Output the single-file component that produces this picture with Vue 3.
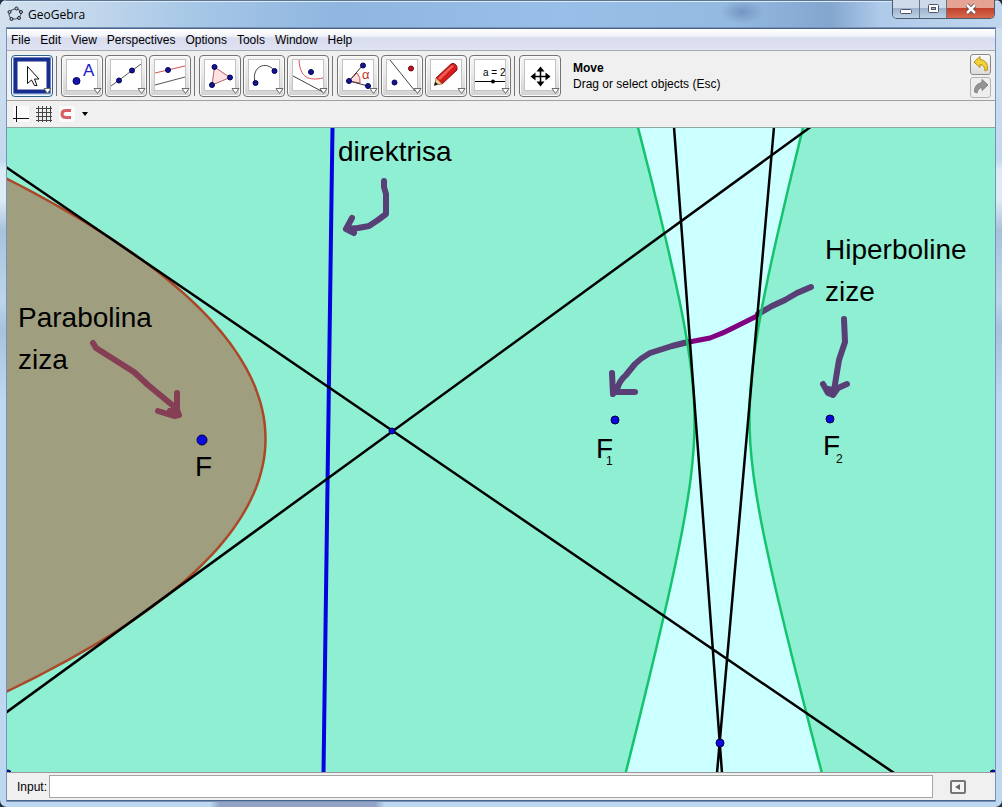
<script setup>
import { ref } from 'vue'

const menus = ['File', 'Edit', 'View', 'Perspectives', 'Options', 'Tools', 'Window', 'Help']
const groups = [
  ['Move'],
  ['Point', 'Line', 'Parallel Line'],
  ['Polygon', 'Arc', 'Parabola'],
  ['Angle', 'Reflect', 'Pen', 'Slider'],
  ['Pan'],
]
const active = ref('Move')
const command = ref('')

function hyperbola(side) {
  const cx = 722, cy = 419.5, a = 27.5, b = 103.2, tilt = 0.0047
  const pts = []
  for (let y = -300; y <= 360; y += 6) {
    const x = side * a * Math.sqrt(1 + (y / b) ** 2)
    pts.push(`${(cx + x + y * tilt).toFixed(1)},${(cy + y - x * tilt).toFixed(1)}`)
  }
  return 'M' + pts.join('L')
}
function parabola() {
  const vx = 265.5, vy = 440.5, p = 63.5, tilt = 0.014
  const pts = []
  for (let t = -270; t <= 270; t += 6) {
    const s = (t * t) / (4 * p)
    pts.push(`${(vx - s - t * tilt).toFixed(1)},${(vy + t - s * tilt).toFixed(1)}`)
  }
  return 'M' + pts.join('L')
}
const left = hyperbola(-1)
const right = hyperbola(1)
const para = parabola()
</script>

<template>
  <div class="window">
    <header class="titlebar">
      <svg class="logo" width="16" height="16" viewBox="0 0 16 16">
        <ellipse cx="8" cy="8" rx="6" ry="5" fill="none" stroke="#555" transform="rotate(-15 8 8)" />
        <g fill="#b9bde8" stroke="#222">
          <circle cx="9.500" cy="2.500" r="1.500" /><circle cx="2.500" cy="6" r="1.500" />
          <circle cx="4.500" cy="13" r="1.500" /><circle cx="12" cy="12" r="1.500" /><circle cx="14" cy="6" r="1.500" />
        </g>
      </svg>
      <span class="title">GeoGebra</span>
      <div class="controls">
        <button aria-label="Minimize"><svg width="14" height="12" viewBox="0 0 14 12"><rect x="1.500" y="6.500" width="11" height="4" rx="1" fill="#fff" stroke="#4c5568" /></svg></button>
        <button aria-label="Maximize"><svg width="14" height="12" viewBox="0 0 14 12"><rect x="2.500" y="1.500" width="10" height="8" rx="1" fill="#fff" stroke="#4c5568" /><rect x="5.500" y="4.500" width="4" height="2" fill="#9db4cc" stroke="#4c5568" /></svg></button>
        <button aria-label="Close" class="close"><svg width="14" height="12" viewBox="0 0 14 12"><path d="M3 2L11 10M11 2L3 10" stroke="#554047" stroke-width="4" /><path d="M3 2L11 10M11 2L3 10" stroke="#fff" stroke-width="2.500" /></svg></button>
      </div>
    </header>
    <main class="client">
      <nav class="menubar">
        <button v-for="m in menus" :key="m">{{ m }}</button>
      </nav>
      <div class="toolbar">
        <div v-for="g in groups" :key="g[0]" class="group">
          <button v-for="t in g" :key="t" :aria-label="t" class="tool" :class="{ active: t === active }" @click="active = t">
            <svg width="40" height="40" viewBox="0 0 40 40" fill="none">
              <rect v-if="t !== 'Move'" x="4.500" y="3.500" width="31" height="31" fill="#fff" stroke="#c3c3c3" />
              <rect v-else x="3.500" y="3.500" width="33" height="32" fill="#fff" stroke="#172d8f" stroke-width="4" />
              <path v-if="t === 'Move'" d="M15.500 10.500V27.500L19.500 24L22.500 29.500H25L22.500 23H27Z" fill="#fff" stroke="#111" />
              <template v-if="t === 'Point'">
                <circle cx="14.500" cy="25" r="3.500" fill="#1515b0" stroke="#000058" />
                <text x="21" y="20" class="letter">A</text>
              </template>
              <template v-if="t === 'Line'">
                <path d="M5 30L35 8" stroke="#555" />
                <g fill="#15158c" stroke="#000060"><circle cx="13" cy="24.500" r="2.500" /><circle cx="26" cy="14.500" r="2.500" /></g>
              </template>
              <template v-if="t === 'Parallel Line'">
                <path d="M5 17L35 10" stroke="#d85050" /><path d="M5 29L35 21" stroke="#555" />
                <circle cx="18" cy="14" r="2.500" fill="#15158c" stroke="#000060" />
              </template>
              <template v-if="t === 'Polygon'">
                <path d="M14.500 11L30 21.500L12 29Z" fill="#ffe2e2" stroke="#b86060" />
                <g fill="#15158c" stroke="#000060"><circle cx="14.500" cy="11" r="2.500" /><circle cx="30" cy="21.500" r="2.500" /><circle cx="12" cy="29" r="2.500" /></g>
              </template>
              <template v-if="t === 'Arc'">
                <path d="M11.500 27C6 12 22 3 30.500 15" stroke="#444" />
                <g fill="#15158c" stroke="#000060"><circle cx="11.500" cy="27" r="2.500" /><circle cx="30.500" cy="15" r="2.500" /></g>
              </template>
              <template v-if="t === 'Parabola'">
                <path d="M5 20L35 36" stroke="#444" /><path d="M11 4C12 22 21 25 35 22" stroke="#d85050" />
                <circle cx="23" cy="16" r="2.500" fill="#15158c" stroke="#000060" />
              </template>
              <template v-if="t === 'Angle'">
                <path d="M11 25L19 17Q23 21 22 27Z" fill="#ffdede" stroke="#c85050" />
                <path d="M25 9L11 25L30 30" stroke="#333" />
                <text x="24" y="23" class="alpha">α</text>
                <g fill="#15158c" stroke="#000060"><circle cx="25" cy="9.500" r="2.500" /><circle cx="11" cy="25" r="2.500" /><circle cx="30" cy="30" r="2.500" /></g>
              </template>
              <template v-if="t === 'Reflect'">
                <path d="M8 4L33 35" stroke="#444" />
                <circle cx="12.500" cy="26.500" r="2.500" fill="#15158c" stroke="#000060" /><circle cx="29" cy="12.500" r="2.500" fill="#b81522" stroke="#700010" />
              </template>
              <template v-if="t === 'Pen'">
                <path d="M10 22L25 8Q29 6 31 11V14L16 28Z" fill="#d41c1c" stroke="#8c1010" />
                <path d="M12 22L26 9L28 10L14 24Z" fill="#f06055" />
                <path d="M10 22L16 28L9 29Z" fill="#f0cf98" stroke="#a08050" /><path d="M9 26L12 28L8 30Z" fill="#111" />
              </template>
              <template v-if="t === 'Slider'">
                <text x="13" y="20" class="slider">a = 2</text>
                <path d="M5 25.500H35" stroke="#000" /><circle cx="23" cy="25.500" r="2" fill="#000" />
              </template>
              <template v-if="t === 'Pan'">
                <path d="M20.500 13V28M13 20.500H28" stroke="#000" stroke-width="1.500" />
                <path d="M20.500 10.500L24.500 15.500H16.500ZM20.500 30.500L24.500 25.500H16.500ZM10.500 20.500L15.500 16.500V24.500ZM30.500 20.500L25.500 16.500V24.500Z" fill="#000" />
              </template>
              <path d="M32 32.500H39L35.500 37.500Z" fill="#fff" stroke="#6b6b6b" />
            </svg>
          </button>
        </div>
        <p class="help"><strong>Move</strong><span>Drag or select objects (Esc)</span></p>
        <div class="history">
          <button aria-label="Undo"><svg width="18" height="18" viewBox="0 0 18 18"><path d="M2 7L8 1.500V4.500Q16 5 15.500 15L13 16Q13 10 8 9.500V12.500Z" fill="#f5d335" stroke="#b48e1a" /></svg></button>
          <button aria-label="Redo" disabled><svg width="18" height="18" viewBox="0 0 18 18"><path d="M16 7L10 1.500V4.500Q2 6 2.500 14L5 15Q6 10 10 9.500V12.500Z" fill="#949494" stroke="#858585" /></svg></button>
        </div>
      </div>
      <div class="stylebar">
        <button aria-label="Axes"><svg width="16" height="16" viewBox="0 0 16 16"><rect width="16" height="16" fill="#fafafa" /><path d="M3.500 0V16M0 12.500H16" stroke="#111" /></svg></button>
        <button aria-label="Grid"><svg width="16" height="16" viewBox="0 0 16 16"><path d="M2.500 0V16M6.500 0V16M10.500 0V16M14.500 0V16M0 2.500H16M0 6.500H16M0 10.500H16M0 14.500H16" stroke="#444" /></svg></button>
        <button aria-label="Point capturing"><svg width="16" height="16" viewBox="0 0 16 16"><rect width="16" height="16" rx="2" fill="#fafafa" /><path d="M12 4.500H7Q3 4.500 3 8T7 11.500H12" fill="none" stroke="#d85d63" stroke-width="3" /></svg></button>
        <button aria-label="Point capturing options" class="drop"><svg width="6" height="4" viewBox="0 0 6 4"><path d="M0 0H6L3 4Z" /></svg></button>
      </div>
      <section class="graphics">
        <svg viewBox="7 128 988 644" preserveAspectRatio="xMidYMid slice" fill="none">
          <path :d="left + 'L-200 772V119Z'" fill="#8fefd2" />
          <path :d="right + 'L1200 772V119Z'" fill="#8fefd2" />
          <path :d="para + 'L-200 711V170Z'" fill="#9f9f80" />
          <path :d="para" stroke="#ac4827" stroke-width="2.500" />
          <g stroke-linecap="round" stroke-linejoin="round" stroke-width="6">
            <path stroke="#853e53" d="M93 343L96 348L134 372L148 385L177 409M177 393V410L179 415L174 416L158 411M177 410L170 411" />
            <g stroke="#584076">
              <path d="M384 181V187L386 194V214L378 220L369 226L358 228L346 229M352 218L346 229L354 233L354 229" />
              <path d="M811 287L797 293L785 300L772 306L758 314M688 342L672 346L650 353Q641 358 635 364L626 375Q618 382 617 391M612 373L613 394M617 392H635" />
              <path d="M844 319L845 342L839 360L836 378L834 391M823 384L828 393L833 395L838 388L847 384M833 390L828 389" />
            </g>
          </g>
          <path d="M689 342L710 338Q724 333 735 327L757 316" stroke="#800080" stroke-width="5" />
          <g stroke="#14c46c" stroke-width="2.500"><path :d="left" /><path :d="right" /></g>
          <path d="M332.500 127L323.500 773" stroke="#0404e0" stroke-width="4" />
          <path d="M0 163L900 777M0 717L816 123M674 127L722 773M774 127L717 773" stroke="#000" stroke-width="2.500" />
          <g fill="#0a0ae0" stroke="#000040">
            <circle cx="202" cy="440" r="5" />
            <circle cx="615" cy="420" r="4" /><circle cx="830" cy="419" r="4" /><circle cx="720" cy="743" r="4" />
            <circle cx="392" cy="431" r="3" /><circle cx="8" cy="773" r="3" /><circle cx="993" cy="773" r="3" />
          </g>
          <g class="labels">
            <text x="338" y="161">direktrisa</text>
            <text x="18" y="327">Parabolina</text><text x="18" y="369">ziza</text>
            <text x="825" y="259">Hiperboline</text><text x="825" y="301">zize</text>
            <text x="195" y="476">F</text>
            <text x="596" y="458">F<tspan x="606" y="465" class="sub">1</tspan></text>
            <text x="823" y="455">F<tspan x="836" y="463" class="sub">2</tspan></text>
          </g>
        </svg>
      </section>
      <form class="inputbar" @submit.prevent>
        <label for="cmd">Input:</label>
        <input id="cmd" v-model="command" type="text" />
        <button type="button" aria-label="Input help"><svg width="16" height="14" viewBox="0 0 16 14"><rect x="1" y="1" width="14" height="12" rx="1" fill="#f5f5f5" stroke="#777" stroke-width="2" /><path d="M10 4V10L5 7Z" fill="#666" /></svg></button>
      </form>
    </main>
  </div>
</template>

<style>
body { margin: 0; background: #26303c; }
</style>
<style scoped>
* { box-sizing: border-box; }
.window {
  display: flex; flex-direction: column; height: 100vh; padding: 0 7px 6px;
  border-radius: 7px; overflow: hidden;
  background:
    linear-gradient(90deg, transparent 210px, #93a3c8 220px 375px, transparent 385px) bottom / 100% 5px no-repeat,
    linear-gradient(#d3e1ef, #c3d9ef 160px, #dcebf6 170px 200px, #a9c2dc 230px, #bdd6ee 300px, #a8c2de 330px, #bdd8f0 400px);
  font-family: "Liberation Sans", Arial, sans-serif; font-size: 12px; color: #000;
}
button { border: 0; padding: 0; margin: 0; background: none; font: inherit; color: inherit; }
svg { display: block; }
.titlebar {
  display: flex; align-items: center; height: 28px; flex: none; margin: 0 -7px; padding: 0 7px;
  background:
    radial-gradient(ellipse 22px 12px at 742px 12px, #5f81ac99, transparent),
    linear-gradient(90deg, #d3e1ef 0, #c4d8ec 80px, #a5c6e6 200px, #8fb6e0 340px, #98bfe7 560px, #94bae2 730px, #83a6cf 830px, #afcaea 880px, #c0d6ee 100%);
  box-shadow: inset 0 1px 0 #5d7590, inset 0 2px 0 #dcebf8;
}
.title { font-family: "Open Sans", "Segoe UI", sans-serif; font-size: 12px; margin-left: 5px; flex: 1; }
.controls { display: flex; align-self: flex-start; height: 19px; border: 1px solid #4d5a70; border-top: 0; border-radius: 0 0 5px 5px; overflow: hidden; }
.controls button { width: 27px; display: grid; place-items: center; border-right: 1px solid #66758c; background: linear-gradient(#ccdaea 0 45%, #9db3cd 46%, #bfd2e6); }
.controls .close { width: 47px; border: 0; background: linear-gradient(#e5a394 0 45%, #c2402c 46%, #d66a4d); }
.client { flex: 1; min-height: 0; display: flex; flex-direction: column; border: 1px solid #47628c; border-width: 1px 0 1px 0; background: #f0f0f0; box-shadow: 0 0 0 1px #7892b4; }
.menubar { display: flex; gap: 10px; height: 22px; flex: none; padding-left: 4px; border-bottom: 1px solid #a9a9b2; background: linear-gradient(#fff, #f4f5fb 30%, #d8dcee 45%, #dfe3f3); }
.toolbar { display: flex; align-items: center; height: 50px; flex: none; padding: 0 4px; border-bottom: 1px solid #a0a0a0; }
.group { display: flex; gap: 2px; }
.group + .group::before { content: ""; width: 1px; height: 40px; margin: 1px 2px 0 3px; background: #777; }
.tool { width: 42px; height: 42px; border: 1px solid #747474; border-radius: 4px; background: linear-gradient(#f4f4f4, #e9e9e9 45%, #d2d2d2); box-shadow: inset 0 0 0 1px #fafafa; }
.tool.active { border: 1px solid #2d628b; background: #b8d9ee; }
.help { display: flex; flex-direction: column; margin: 0 0 0 12px; line-height: 16px; flex: 1; }
.history { display: flex; flex-direction: column; gap: 2px; }
.history button { width: 21px; height: 21px; display: grid; place-items: center; border: 1px solid #888; border-radius: 3px; background: linear-gradient(#fafafa, #dcdcdc); }
.history button:disabled { border-color: #b4b4b4; background: #eee; }
.stylebar { display: flex; align-items: center; gap: 7px; height: 27px; flex: none; padding-left: 6px; border-bottom: 1px solid #8ca79c; }
.graphics { flex: 1; min-height: 0; background: #ccffff; overflow: hidden; }
.graphics svg { width: 100%; height: 100%; }
.labels { fill: #000; font-size: 28px; }
.sub { font-size: 12px; }
.letter { font-size: 17px; fill: #2020c8; }
.alpha { font-size: 13px; fill: #c03030; }
.slider { font-size: 10px; fill: #000; }
.inputbar { display: flex; align-items: center; height: 28px; flex: none; padding-left: 10px; border-top: 1px solid #999; }
.inputbar input { flex: 1; min-width: 0; height: 23px; margin-left: 2px; border: 1px solid #a5a5a5; background: #fff; font: inherit; outline: 0; }
.inputbar button { margin: 0 29px 0 17px; }
</style>
